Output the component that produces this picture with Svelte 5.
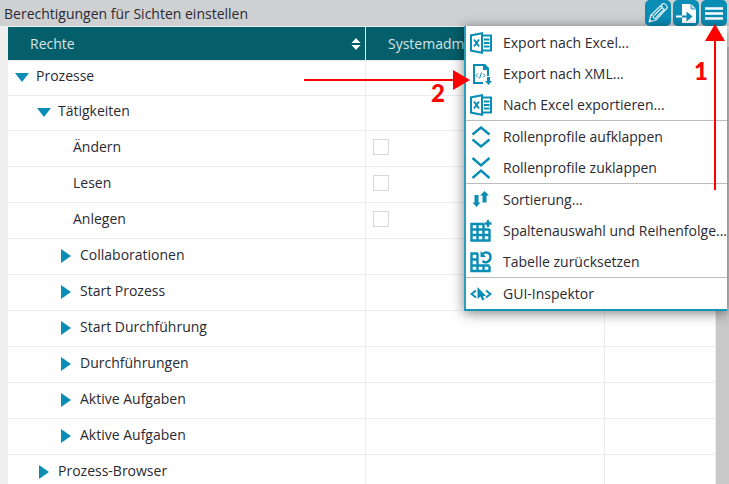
<script>
  const indents = [15, 37, 59];

  const rows = [
    { label: 'Prozesse', level: 0, state: 'open' },
    { label: 'Tätigkeiten', level: 1, state: 'open' },
    { label: 'Ändern', state: 'leaf' },
    { label: 'Lesen', state: 'leaf' },
    { label: 'Anlegen', state: 'leaf' },
    { label: 'Collaborationen', level: 2, state: 'closed' },
    { label: 'Start Prozess', level: 2, state: 'closed' },
    { label: 'Start Durchführung', level: 2, state: 'closed' },
    { label: 'Durchführungen', level: 2, state: 'closed' },
    { label: 'Aktive Aufgaben', level: 2, state: 'closed' },
    { label: 'Aktive Aufgaben', level: 2, state: 'closed' },
    { label: 'Prozess-Browser', level: 1, state: 'closed' }
  ];

  const groups = [
    [
      { icon: 'excel', label: 'Export nach Excel...' },
      { icon: 'xml', label: 'Export nach XML...' },
      { icon: 'excel', label: 'Nach Excel exportieren...' }
    ],
    [
      { icon: 'expand', label: 'Rollenprofile aufklappen' },
      { icon: 'collapse', label: 'Rollenprofile zuklappen' }
    ],
    [
      { icon: 'sort', label: 'Sortierung...' },
      { icon: 'columns', label: 'Spaltenauswahl und Reihenfolge...' },
      { icon: 'reset', label: 'Tabelle zurücksetzen' }
    ],
    [{ icon: 'inspect', label: 'GUI-Inspektor' }]
  ];
</script>

{#snippet menuIcon(name)}
  <svg class="icon" viewBox="0 0 22 22" stroke-width="2" aria-hidden="true">
    {#if name === 'excel'}
      <path class="fill" fill-rule="evenodd" d="M0 2.5 13 0v22L0 19.5ZM2 4.300v13.400l9 1.700V2.600Z" />
      <path class="line" d="m4 7.500 5 7M9 7.500l-5 7" />
      <path class="line" d="M13 3.500h8v15h-8" />
      <path class="line" d="M14 7.500h5.500M14 11h5.500M14 14.500h5.500" stroke-width="1.800" />
    {:else if name === 'xml'}
      <path class="line" d="M13 20H4V2h10l4 4v7" />
      <path class="fill" d="M13 1v6h6v-2l-4-4ZM17 14h3v4h2l-3.500 4-3.500-4h2Z" />
      <path class="line" d="m8 10.500-2 2 2 2M13 10.500l2 2-2 2M11.500 9.500l-2 6" stroke-width="1" />
    {:else if name === 'expand'}
      <path class="line" d="m2.500 8.500 8.500-7 8.500 7M2.500 13.500l8.500 7 8.500-7" stroke-width="2.400" />
    {:else if name === 'collapse'}
      <path class="line" d="m2.500 1 8.500 7.500L19.500 1M2.500 21l8.500-7.500 8.500 7.500" stroke-width="2.400" />
    {:else if name === 'sort'}
      <path class="fill" d="M4.500 6h4v7.500h2L6.500 18l-4-4.500h2ZM12.500 13.500h4V6.500h2.500L14.500 2l-4.500 4.500h2.500Z" />
    {:else if name === 'columns'}
      <path class="line" d="M14 4H1.500v16.500h18V9M1.500 9.500h18M1.500 15h18M7.500 4v16.500M13.500 4v16.500" stroke-width="2.400" />
      <path class="line" d="M18 0v7M14.500 3.500h7" stroke-width="2.400" />
    {:else if name === 'reset'}
      <path class="line" d="M8 2.500H1.500v17.500h18v-5M1.500 14.500h18M7.500 2.500v17.500M1.500 8.500h6M13.500 14v6" stroke-width="2.400" />
      <path class="line" d="M12.500 3C15 .5 20.500 1 20.500 6s-5 6.500-8 4" stroke-width="2.400" />
      <path class="fill" d="M10.500 0v6H16Z" />
    {:else}
      <path class="line" d="M6 7.500 1.500 11 6 14.500M16 7.500l4.500 3.500-4.500 3.500" />
      <path class="fill" d="M7.500 4v12l3-2.500 1.700 4 2.300-1-1.700-3.500h3.200Z" />
    {/if}
  </svg>
{/snippet}

<main>
  <header>
    <h1>Berechtigungen für Sichten einstellen</h1>
    <div class="tools">
      <button type="button" aria-label="Bearbeiten">
        <svg viewBox="0 0 26 26" aria-hidden="true">
          <g fill="none" stroke="#d9f0f6" stroke-width="1.200" stroke-linejoin="round">
            <path d="m4 22 2-7L18 3.500q3 0 4.500 4L11 20Z" />
            <path d="m6 15 2 1 .5 2 2 .2.5 1.800M15.500 6l4.500 4.500M9 15.500l9-9M11 17.500l8.500-8.500" />
          </g>
          <path d="m4 22 .8-3 2 2Z" fill="#fff" />
        </svg>
      </button>
      <button type="button" aria-label="Importieren">
        <svg viewBox="0 0 26 26" aria-hidden="true">
          <path d="M9 4h9l5 5v14H9Z" fill="#fff" />
          <path d="M18 4v5h5" fill="#b9dfea" stroke="#0a8db5" stroke-width=".8" />
          <path d="M9 15.500h4.500v-4l6 5-6 5v-4H9Z" fill="#0a8db5" />
          <path d="M3 16.500h6" fill="none" stroke="#fff" stroke-width="2" />
        </svg>
      </button>
      <button type="button" aria-label="Menü" aria-expanded="true">
        <svg viewBox="0 0 26 26" aria-hidden="true">
          <path d="M4 8.500h18M4 13.500h18M4 18.500h18" stroke="#fff" stroke-width="2.400" />
        </svg>
      </button>
    </div>

    <div class="dropdown">
      <div class="menu" role="menu">
        {#each groups as group}
          <div class="group" role="group">
            {#each group as item}
              <button type="button" role="menuitem">
                {@render menuIcon(item.icon)}
                <span>{item.label}</span>
              </button>
            {/each}
          </div>
        {/each}
      </div>
      <svg class="arrow up" viewBox="0 0 20 166" aria-hidden="true">
        <path d="M10 0 20 17H0Z" />
        <path d="M9 16h2v150H9Z" />
      </svg>
      <strong class="step one">1</strong>
      <svg class="arrow across" viewBox="0 0 166 20" aria-hidden="true">
        <path d="M166 10 149 0v20Z" />
        <path d="M0 9h150v2H0Z" />
      </svg>
      <strong class="step two">2</strong>
    </div>
  </header>

  <div class="content">
    <div class="grid">
      <table>
        <colgroup>
          <col class="rights" />
          <col class="role" />
          <col />
        </colgroup>
        <thead>
          <tr>
            <th scope="col">
              <div class="head">
                <span>Rechte</span>
                <svg class="sorter" viewBox="0 0 10 12" aria-hidden="true">
                  <path d="M5 0 9.500 5H.5ZM5 12 .5 7h9Z" fill="#fff" />
                </svg>
              </div>
            </th>
            <th scope="col"><div class="head">Systemadministrator</div></th>
            <th scope="col"></th>
          </tr>
        </thead>
        <tbody>
          {#each rows as row, i}
            <tr class={row.state}>
              <td>
                {#if row.state === 'leaf'}
                  <label class="leaf-label" for="right-{i}">{row.label}</label>
                {:else}
                  <button
                    type="button"
                    class="node"
                    aria-expanded={row.state === 'open'}
                    style="padding-left: {indents[row.level] - 8}px"
                  >
                    <svg viewBox="0 0 14 14" aria-hidden="true">
                      <path d={row.state === 'open' ? 'M0 3h14L7 12Z' : 'M2 0v14l10-7Z'} />
                    </svg>
                    <span>{row.label}</span>
                  </button>
                {/if}
              </td>
              <td>
                {#if row.state === 'leaf'}
                  <input type="checkbox" id="right-{i}" />
                {/if}
              </td>
              <td></td>
            </tr>
          {/each}
        </tbody>
      </table>
    </div>
    <div class="scrollbar"></div>
  </div>
</main>

<style>
  :global(body) {
    background: #efefef;
  }
  main {
    height: 100vh;
    display: flex;
    flex-direction: column;
    overflow: hidden;
    font: 14px/20px 'Open Sans', 'Noto Sans', sans-serif;
    color: #2a2a32;
  }
  button {
    font: inherit;
    color: inherit;
    border: 0;
    margin: 0;
    padding: 0;
    background: none;
    text-align: left;
  }
  header {
    position: relative;
    z-index: 1;
    flex: none;
    display: flex;
    justify-content: space-between;
    height: 26px;
    padding: 0 2px 0 4px;
    background: #cfd0d2;
  }
  h1 {
    margin: 0;
    padding-top: 4px;
    font-size: 14px;
    font-weight: 400;
  }
  .tools {
    display: flex;
    gap: 2px;
  }
  .tools button {
    width: 26px;
    height: 26px;
    border-radius: 5px;
    background: #0a8db5;
  }
  .tools svg {
    display: block;
  }
  .dropdown {
    position: absolute;
    top: 26px;
    right: 2px;
    width: 263px;
  }
  .menu {
    padding-top: 1px;
    background: #fff;
    border-left: 2px solid #2d9dbb;
    border-bottom: 2px solid #1592b6;
    box-shadow: 0 2px 12px rgba(0, 0, 0, 0.5);
  }
  .group + .group {
    border-top: 1px solid #bdbdbd;
  }
  .menu button {
    display: flex;
    align-items: center;
    gap: 11px;
    width: 100%;
    height: 31px;
    padding-left: 4px;
    white-space: nowrap;
  }
  .icon {
    flex: none;
    width: 22px;
    height: 22px;
  }
  .fill {
    fill: #0a8db5;
  }
  .line {
    fill: none;
    stroke: #0a8db5;
  }
  .arrow {
    position: absolute;
    fill: #f00;
  }
  .up {
    top: -2px;
    right: 2px;
    width: 20px;
    height: 166px;
  }
  .across {
    top: 44px;
    right: 257px;
    width: 166px;
    height: 20px;
  }
  .step {
    position: absolute;
    color: #f00;
    font: 900 24px/24px Lato, sans-serif;
  }
  .one {
    top: 33px;
    right: 19px;
  }
  .two {
    top: 55px;
    right: 282px;
  }
  .content {
    flex: 1;
    min-height: 0;
    display: flex;
    padding: 1px 0 0 8px;
  }
  .grid {
    flex: 1;
    overflow: hidden;
    background: #fff;
  }
  .scrollbar {
    width: 13px;
    margin-top: 20px;
    background: #c9c9c9;
  }
  table {
    width: 100%;
    table-layout: fixed;
    border-collapse: separate;
    border-spacing: 0;
  }
  .rights {
    width: 358px;
  }
  .role {
    width: 239px;
  }
  th,
  td {
    box-sizing: border-box;
    padding: 0;
    font-weight: 400;
    text-align: left;
    vertical-align: middle;
    border-right: 1px solid #ececec;
    border-bottom: 1px solid #ececec;
  }
  th {
    height: 34px;
    background: #055f6b;
    color: #d5e5e7;
  }
  .head {
    display: flex;
    align-items: center;
    justify-content: space-between;
    padding: 0 4px 0 22px;
  }
  .sorter {
    width: 10px;
    height: 12px;
  }
  td {
    height: 36px;
    padding-bottom: 4px;
  }
  .open td {
    height: 35px;
  }
  .node {
    display: flex;
    align-items: center;
    gap: 7px;
  }
  .node svg {
    width: 14px;
    height: 14px;
    margin-top: 2px;
    fill: #0a8db5;
  }
  .leaf-label {
    display: block;
    padding-left: 65px;
  }
  input {
    appearance: none;
    display: block;
    box-sizing: border-box;
    width: 16px;
    height: 16px;
    margin: 0 0 0 7px;
    border: 1px solid #d8d8d8;
    background: #fff;
  }
</style>
